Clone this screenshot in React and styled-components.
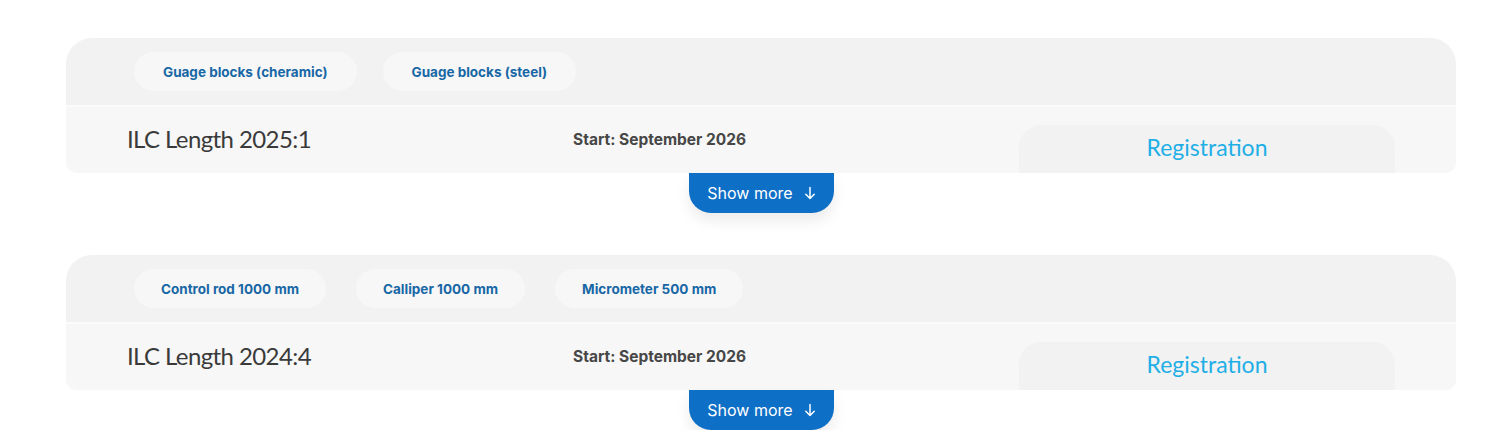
import React from 'react';
import styled, { createGlobalStyle } from 'styled-components';

const GlobalStyle = createGlobalStyle`
  * { box-sizing: border-box; }
  body {
    margin: 0;
    background: #ffffff;
    font-family: Inter, "Liberation Sans", sans-serif;
  }
`;

const Page = styled.div`
  padding: 38px 44px 0 66px;
  display: flex;
  flex-direction: column;
  gap: 42px;
`;

const Card = styled.section`
  display: flex;
  flex-direction: column;
`;

const TagBar = styled.div`
  background: #f2f2f2;
  border-radius: 26px 26px 0 0;
  height: 67px;
  padding: 0 0 0 68px;
  display: flex;
  align-items: center;
  gap: ${p => p.gap}px;
`;

const Tag = styled.span`
  background: #f7f7f7;
  border-radius: 20px;
  height: 39px;
  padding: 0 ${p => p.pad}px;
  display: flex;
  align-items: center;
  font-size: 13.5px;
  font-weight: 700;
  color: #1767a6;
`;

const Row = styled.div`
  background: #f7f7f7;
  border-top: 2px solid #fbfbfb;
  border-radius: 0 0 10px 10px;
  height: 68px;
  padding: 0 61px;
  display: grid;
  grid-template-columns: 446px 446px 1fr;
  align-items: center;
`;

const Title = styled.h2`
  margin: 0;
  font-family: Lato, "Noto Sans", sans-serif;
  font-weight: 400;
  font-size: 24px;
  letter-spacing: -0.6px;
  color: #3a3a3a;
  padding-bottom: 3px;
`;

const Start = styled.div`
  font-size: 15.5px;
  font-weight: 700;
  color: #474747;
  padding-bottom: 2px;
`;

const Register = styled.a`
  align-self: end;
  height: 48px;
  background: #f2f2f2;
  border-radius: 22px 22px 0 0;
  display: flex;
  align-items: center;
  justify-content: center;
  font-family: Lato, "Noto Sans", sans-serif;
  font-size: 23px;
  color: #1fafe6;
  text-decoration: none;
  padding-bottom: 5px;
`;

const More = styled.button`
  align-self: center;
  width: 145px;
  height: 40px;
  border: none;
  border-radius: 0 0 22px 22px;
  background: #0e6fc6;
  color: #ffffff;
  font-family: Inter, "Liberation Sans", sans-serif;
  font-size: 16px;
  display: flex;
  align-items: center;
  justify-content: center;
  gap: 10px;
  box-shadow: 0 8px 14px rgba(0, 0, 0, 0.08);
  padding: 0 0 0 2px;
  cursor: pointer;
`;

const Arrow = () => (
  <svg width="14" height="14" viewBox="0 0 14 14" fill="none" stroke="#fff" strokeWidth="1.5" strokeLinecap="round" strokeLinejoin="round">
    <path d="M7 1.5v11M2.8 8.3L7 12.5l4.2-4.2" />
  </svg>
);

const courses = [
  {
    title: 'ILC Length 2025:1',
    gap: 26,
    pad: 29,
    tags: ['Guage blocks (cheramic)', 'Guage blocks (steel)'],
  },
  {
    title: 'ILC Length 2024:4',
    gap: 30,
    pad: 27,
    tags: ['Control rod 1000 mm', 'Calliper 1000 mm', 'Micrometer 500 mm'],
  },
];

export default function App() {
  return (
    <>
      <GlobalStyle />
      <Page>
        {courses.map(c => (
          <Card key={c.title}>
            <TagBar gap={c.gap}>
              {c.tags.map(t => (
                <Tag key={t} pad={c.pad}>{t}</Tag>
              ))}
            </TagBar>
            <Row>
              <Title>{c.title}</Title>
              <Start>Start: September 2026</Start>
              <Register href="#">Registration</Register>
            </Row>
            <More>
              Show more <Arrow />
            </More>
          </Card>
        ))}
      </Page>
    </>
  );
}
